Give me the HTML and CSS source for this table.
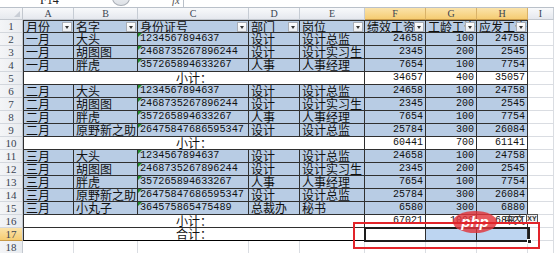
FILE: index.html
```html
<!DOCTYPE html>
<html>
<head>
<meta charset="utf-8">
<link rel="stylesheet" href="styles.css">
</head>
<body>
<div class="sheet">
  <div class="fbar">
    <span class="namebox">F14</span>
    <span class="knob"></span>
    <span class="fx">fx</span>
    <span class="fsep"></span>
  </div>
  <div class="grid">
    <div class="corner"><span class="tri"></span></div>
    <div class="h">A</div><div class="h">B</div><div class="h">C</div><div class="h">D</div><div class="h">E</div>
    <div class="h sel">F</div><div class="h sel">G</div><div class="h sel">H</div><div class="h">I</div>

    <div class="rh">1</div>
    <div class="t b top first fh">月份<span class="fb"></span></div>
    <div class="t b top fh">名字<span class="fb"></span></div>
    <div class="t b top fh">身份证号<span class="fb"></span></div>
    <div class="t b top fh">部门<span class="fb"></span></div>
    <div class="t b top fh">岗位<span class="fb"></span></div>
    <div class="t b top fh">绩效工资<span class="fb"></span></div>
    <div class="t b top fh">工龄工资<span class="fb"></span></div>
    <div class="t b top fh">应发工资<span class="fb"></span></div>
    <div class="c"></div>

    <div class="rh">2</div>
    <div class="t b first">一月</div><div class="t b">大头</div><div class="t b id">1234567894637</div><div class="t b">设计</div><div class="t b">设计总监</div>
    <div class="t b n">24658</div><div class="t b n">100</div><div class="t b n">24758</div><div class="c"></div>

    <div class="rh">3</div>
    <div class="t b first">一月</div><div class="t b">胡图图</div><div class="t b id">2468735267896244</div><div class="t b">设计</div><div class="t b">设计实习生</div>
    <div class="t b n">2345</div><div class="t b n">200</div><div class="t b n">2545</div><div class="c"></div>

    <div class="rh">4</div>
    <div class="t b first">一月</div><div class="t b">胖虎</div><div class="t b id">357265894633267</div><div class="t b">人事</div><div class="t b">人事经理</div>
    <div class="t b n">7654</div><div class="t b n">100</div><div class="t b n">7754</div><div class="c"></div>

    <div class="rh">5</div>
    <div class="t m first">小计：</div>
    <div class="t n">34657</div><div class="t n">400</div><div class="t n">35057</div><div class="c"></div>

    <div class="rh">6</div>
    <div class="t b first">二月</div><div class="t b">大头</div><div class="t b id">1234567894637</div><div class="t b">设计</div><div class="t b">设计总监</div>
    <div class="t b n">24658</div><div class="t b n">100</div><div class="t b n">24758</div><div class="c"></div>

    <div class="rh">7</div>
    <div class="t b first">二月</div><div class="t b">胡图图</div><div class="t b id">2468735267896244</div><div class="t b">设计</div><div class="t b">设计实习生</div>
    <div class="t b n">2345</div><div class="t b n">200</div><div class="t b n">2545</div><div class="c"></div>

    <div class="rh">8</div>
    <div class="t b first">二月</div><div class="t b">胖虎</div><div class="t b id">357265894633267</div><div class="t b">人事</div><div class="t b">人事经理</div>
    <div class="t b n">7654</div><div class="t b n">100</div><div class="t b n">7754</div><div class="c"></div>

    <div class="rh">9</div>
    <div class="t b first">二月</div><div class="t b">原野新之助</div><div class="t b id">26475847686595347</div><div class="t b">设计</div><div class="t b">设计总监</div>
    <div class="t b n">25784</div><div class="t b n">300</div><div class="t b n">26084</div><div class="c"></div>

    <div class="rh">10</div>
    <div class="t m first">小计：</div>
    <div class="t n">60441</div><div class="t n">700</div><div class="t n">61141</div><div class="c"></div>

    <div class="rh">11</div>
    <div class="t b first">三月</div><div class="t b">大头</div><div class="t b id">1234567894637</div><div class="t b">设计</div><div class="t b">设计总监</div>
    <div class="t b n">24658</div><div class="t b n">100</div><div class="t b n">24758</div><div class="c"></div>

    <div class="rh">12</div>
    <div class="t b first">三月</div><div class="t b">胡图图</div><div class="t b id">2468735267896244</div><div class="t b">设计</div><div class="t b">设计实习生</div>
    <div class="t b n">2345</div><div class="t b n">200</div><div class="t b n">2545</div><div class="c"></div>

    <div class="rh">13</div>
    <div class="t b first">三月</div><div class="t b">胖虎</div><div class="t b id">357265894633267</div><div class="t b">人事</div><div class="t b">人事经理</div>
    <div class="t b n">7654</div><div class="t b n">100</div><div class="t b n">7754</div><div class="c"></div>

    <div class="rh">14</div>
    <div class="t b first">三月</div><div class="t b">原野新之助</div><div class="t b id">26475847686595347</div><div class="t b">设计</div><div class="t b">设计总监</div>
    <div class="t b n">25784</div><div class="t b n">300</div><div class="t b n">26084</div><div class="c"></div>

    <div class="rh">15</div>
    <div class="t b first">三月</div><div class="t b">小丸子</div><div class="t b id">364575865475489</div><div class="t b">总裁办</div><div class="t b">秘书</div>
    <div class="t b n">6580</div><div class="t b n">300</div><div class="t b n">6880</div><div class="c"></div>

    <div class="rh">16</div>
    <div class="t m first">小计：</div>
    <div class="t n">67021</div><div class="t n">1000</div><div class="t n">68021</div><div class="c"></div>

    <div class="rh sel">17</div>
    <div class="t m first last">合计：</div>
    <div class="t n last"></div><div class="t n last selfill"></div><div class="t n last selfill"></div><div class="c"></div>

    <div class="rh">18</div>
    <div class="c"></div><div class="c"></div><div class="c"></div><div class="c"></div><div class="c"></div>
    <div class="c"></div><div class="c"></div><div class="c"></div><div class="c"></div>
  </div>

  <div class="selbox"><span class="handle"></span></div>
  <div class="php">php</div>
  <div class="ime"><span class="zw">中文</span><span class="xy">XY</span></div>
  <div class="redbox"></div>
</div>
</body>
</html>
```

FILE: styles.css
```css
* { box-sizing: border-box; }
html, body { margin: 0; padding: 0; }
body {
  width: 554px;
  height: 253px;
  overflow: hidden;
  background: #fff;
  font-family: "Noto Sans CJK SC", sans-serif;
}
.sheet { position: relative; width: 554px; height: 253px; overflow: hidden; }

.fbar {
  height: 8px;
  border-bottom: 1px solid #b9c0c9;
  display: flex;
  align-items: flex-start;
  overflow: hidden;
  background: #fff;
}
.namebox {
  margin-left: 40px;
  margin-top: -6px;
  width: 58px;
  font: 12px/12px "Liberation Serif", serif;
  color: #222;
  flex: none;
}
.knob {
  flex: none;
  margin-left: 14px;
  margin-top: -10px;
  width: 18px;
  height: 16px;
  border-radius: 50%;
  border: 1px solid #a9aeb6;
  background: linear-gradient(#f5f6f8, #dde1e6);
}
.fx {
  flex: none;
  margin-left: 42px;
  margin-top: -6px;
  font: italic 11px/12px "Liberation Serif", serif;
  color: #555;
}
.fsep {
  flex: none;
  margin-left: 3px;
  width: 1px;
  height: 8px;
  background: #b9c0c9;
}

.grid {
  display: grid;
  grid-template-columns: 23px 51px 64px 111px 51px 65px 61px 51px 51px 26px;
  grid-template-rows: 12px repeat(18, 13px);
}

.corner {
  background: linear-gradient(#f6f7f9, #e6e9ee);
  border-right: 1px solid #c3c8cf;
  border-bottom: 1px solid #c3c8cf;
  position: relative;
}
.corner .tri {
  position: absolute;
  right: 2px;
  bottom: 2px;
  width: 0; height: 0;
  border-left: 6px solid transparent;
  border-bottom: 6px solid #c9ced6;
}
.h {
  background: linear-gradient(#f8f9fb, #e5e8ee);
  border-right: 1px solid #c6ccd4;
  border-bottom: 1px solid #c3c8cf;
  font: 10px/11px "Liberation Serif", serif;
  color: #3a4452;
  text-align: center;
}
.h.sel {
  background: linear-gradient(#fbe3aa, #f5cc72);
  border-right-color: #d9b268;
  border-bottom-color: #c99a47;
}
.rh {
  background: linear-gradient(90deg, #f4f5f7, #e8ebef);
  border-right: 1px solid #c3c8cf;
  border-bottom: 1px solid #d3d7dd;
  font: 11px/12px "Liberation Serif", serif;
  color: #3a4452;
  text-align: center;
}
.rh.sel {
  background: linear-gradient(#fbe3aa, #f5cc72);
  border-bottom-color: #c99a47;
}

.c {
  border-right: 1px solid #dadde2;
  border-bottom: 1px solid #dadde2;
}

.t {
  position: relative;
  border-right: 1px solid #2f2f2f;
  border-bottom: 1px solid #2f2f2f;
  font-size: 12px;
  line-height: 12px;
  color: #111;
  padding-left: 2px;
  white-space: nowrap;
  overflow: hidden;
  background: #fff;
}
.t.b { background: #b8cce4; }
.t.first { border-left: 1px solid #2f2f2f; }
.t.top { border-top: 1px solid #2f2f2f; }
.t.last { border-bottom: 1px solid #000; }
.t.m { grid-column: span 5; text-align: center; padding-left: 0; }
.t.n {
  text-align: right;
  padding: 0 2px 0 0;
  font-family: "Liberation Mono", monospace;
  font-size: 10px;
  line-height: 12px;
}
.t.id {
  font-family: "Liberation Mono", monospace;
  font-size: 10.2px;
  line-height: 12px;
}
.t.id::before {
  content: "";
  position: absolute;
  left: 0; top: 0;
  width: 0; height: 0;
  border-top: 4px solid #1f8a2a;
  border-right: 4px solid transparent;
}
.t.selfill { background: #bdd5f1; }
.t.fh { padding-right: 12px; }
.fb {
  position: absolute;
  right: 1px;
  top: 1px;
  width: 10px;
  height: 10px;
  border: 1px solid #a9aeb6;
  background: linear-gradient(#ffffff, #e9ecf0);
}
.fb::after {
  content: "";
  position: absolute;
  left: 2px;
  top: 3px;
  border-left: 2.5px solid transparent;
  border-right: 2.5px solid transparent;
  border-top: 3px solid #333;
}

.selbox {
  position: absolute;
  left: 364px;
  top: 227px;
  width: 166px;
  height: 15px;
  border: 2px solid #1d1d1d;
}
.handle {
  position: absolute;
  right: -4px;
  bottom: -4px;
  width: 5px;
  height: 5px;
  background: #1d1d1d;
  border: 1px solid #fff;
}

.php {
  position: absolute;
  left: 453px;
  top: 211px;
  width: 44px;
  height: 22px;
  border-radius: 50%;
  background: rgba(226, 52, 58, 0.82);
  color: #fff;
  font: italic bold 15px/21px "Liberation Sans", sans-serif;
  text-align: center;
}
.ime {
  position: absolute;
  left: 504px;
  top: 213px;
  display: flex;
  align-items: center;
  gap: 2px;
}
.zw {
  font-size: 11px;
  line-height: 12px;
  color: #333;
  letter-spacing: -1px;
}
.xy {
  width: 12px;
  height: 10px;
  border: 1px solid #555;
  background: #f2f2f2;
  font: bold 7px/8px "Liberation Sans", sans-serif;
  text-align: center;
  color: #333;
}
.redbox {
  position: absolute;
  left: 353px;
  top: 222px;
  width: 187px;
  height: 27px;
  border: 2px solid #e2242a;
}
```
